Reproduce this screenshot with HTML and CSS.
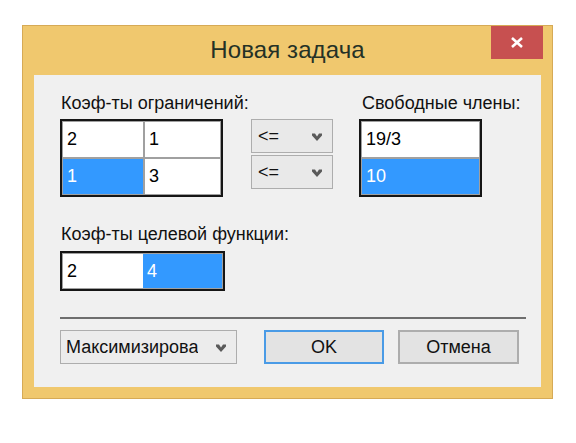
FILE: index.html
```html
<!DOCTYPE html>
<html lang="ru">
<head>
<meta charset="utf-8">
<title>Новая задача</title>
<link rel="stylesheet" href="styles.css">
</head>
<body>
<div class="stage">
  <div class="window">
    <div class="titlebar">
      <div class="title">Новая задача</div>
      <button class="close" aria-label="Закрыть">
        <svg width="14" height="11" viewBox="0 0 14 11"><path d="M2 1 L12 10 M12 1 L2 10" stroke="#fff" stroke-width="2.6" fill="none"/></svg>
      </button>
    </div>
    <div class="client">
      <div class="top">
        <div class="label">Коэф-ты ограничений:</div>
        <div></div>
        <div class="label label-free">Свободные члены:</div>

        <div class="table t2x2">
          <div class="cell">2</div>
          <div class="cell">1</div>
          <div class="cell sel">1</div>
          <div class="cell">3</div>
        </div>
        <div class="signs">
          <div class="combo small"><span>&lt;=</span><svg class="chev" width="10" height="8" viewBox="0 0 10 8"><polygon points="0,0.5 3,0.5 5,3.5 7,0.5 10,0.5 10,2.5 5,8 0,2.5" fill="#5a5a5a"/></svg></div>
          <div class="combo small"><span>&lt;=</span><svg class="chev" width="10" height="8" viewBox="0 0 10 8"><polygon points="0,0.5 3,0.5 5,3.5 7,0.5 10,0.5 10,2.5 5,8 0,2.5" fill="#5a5a5a"/></svg></div>
        </div>
        <div class="table t1x2">
          <div class="cell">19/3</div>
          <div class="cell sel">10</div>
        </div>
      </div>

      <div class="label label-goal">Коэф-ты целевой функции:</div>
      <div class="table t2x1">
        <div class="cell">2</div>
        <div class="cell sel">4</div>
      </div>

      <div class="sep"></div>

      <div class="actions">
        <div class="combo wide"><span>Максимизирова</span><svg class="chev" width="10" height="8" viewBox="0 0 10 8"><polygon points="0,0.5 3,0.5 5,3.5 7,0.5 10,0.5 10,2.5 5,8 0,2.5" fill="#5a5a5a"/></svg></div>
        <button class="btn ok">OK</button>
        <button class="btn cancel">Отмена</button>
      </div>
    </div>
  </div>
</div>
</body>
</html>
```
FILE: styles.css
```css
* { box-sizing: border-box; }

html, body {
  margin: 0;
  background: #ffffff;
}

body {
  font-family: "Liberation Sans", Arial, sans-serif;
  font-size: 18px;
  color: #000;
}

.stage {
  padding: 25px 0 0 22px;
}

.window {
  width: 531px;
  height: 374px;
  background: #f0c86e;
  border: 1px solid #d6aa56;
  display: flex;
  flex-direction: column;
}

.titlebar {
  height: 49px;
  display: grid;
  grid-template-columns: 1fr auto 1fr;
  align-items: center;
}

.title {
  grid-column: 2;
  font-size: 24px;
  color: #243126;
  letter-spacing: 0.1px;
  padding-bottom: 1px;
}

.close {
  grid-column: 3;
  justify-self: end;
  align-self: start;
  width: 52px;
  height: 33px;
  margin: 0 9px 0 0;
  padding: 0;
  border: none;
  background: #c75050;
  display: flex;
  align-items: center;
  justify-content: center;
}

.client {
  margin: 0 11px 11px 11px;
  height: 312px;
  background: #f0f0f0;
  padding: 18px 15px 0 26px;
}

.top {
  display: grid;
  grid-template-columns: 191px 108px auto;
  grid-template-rows: 20px auto;
  row-gap: 6px;
}

.label {
  height: 20px;
  line-height: 20px;
  white-space: nowrap;
  color: #111;
  padding-left: 1px;
}

.label-free {
  padding-left: 3px;
}

.label-goal {
  margin-top: 27px;
}

.table {
  display: grid;
  border: 2px solid #151515;
  padding: 1px;
  background: #a0a0a0;
  gap: 2px;
}

.t2x2 {
  width: 163px;
  grid-template-columns: 80px 75px;
  grid-auto-rows: 35px;
}

.t1x2 {
  width: 123px;
  grid-template-columns: 117px;
  grid-auto-rows: 35px;
}

.t2x1 {
  width: 165px;
  margin-top: 7px;
  grid-template-columns: 80px 79px;
  grid-auto-rows: 34px;
  gap: 0;
}

.cell {
  background: #ffffff;
  display: flex;
  align-items: center;
  padding-left: 4px;
  color: #000;
}

.cell.sel {
  background: #3399ff;
  color: #ffffff;
}

.signs {
  display: flex;
  flex-direction: column;
  gap: 2px;
}

.combo {
  display: flex;
  align-items: center;
  justify-content: space-between;
  background: #e9e9e9;
  border: 1px solid #adadad;
  padding: 0 10px 0 6px;
  height: 34px;
  color: #111;
}

.combo.small {
  width: 82px;
}

.combo.wide {
  width: 177px;
  background: #ececec;
  padding-left: 5px;
}

.combo span {
  white-space: nowrap;
  overflow: hidden;
}

.chev {
  flex: none;
  margin-top: 1px;
}

.sep {
  margin-top: 26px;
  height: 2px;
  background: #6e6e6e;
}

.actions {
  margin-top: 11px;
  display: flex;
  align-items: center;
}

.btn {
  height: 34px;
  background: #e3e3e3;
  font-family: "Liberation Sans", Arial, sans-serif;
  font-size: 18px;
  color: #111;
  padding: 0;
}

.btn.ok {
  width: 120px;
  margin-left: 27px;
  border: 2px solid #4a9be6;
}

.btn.cancel {
  width: 121px;
  margin-left: 14px;
  border: 2px solid #adadad;
}
```
